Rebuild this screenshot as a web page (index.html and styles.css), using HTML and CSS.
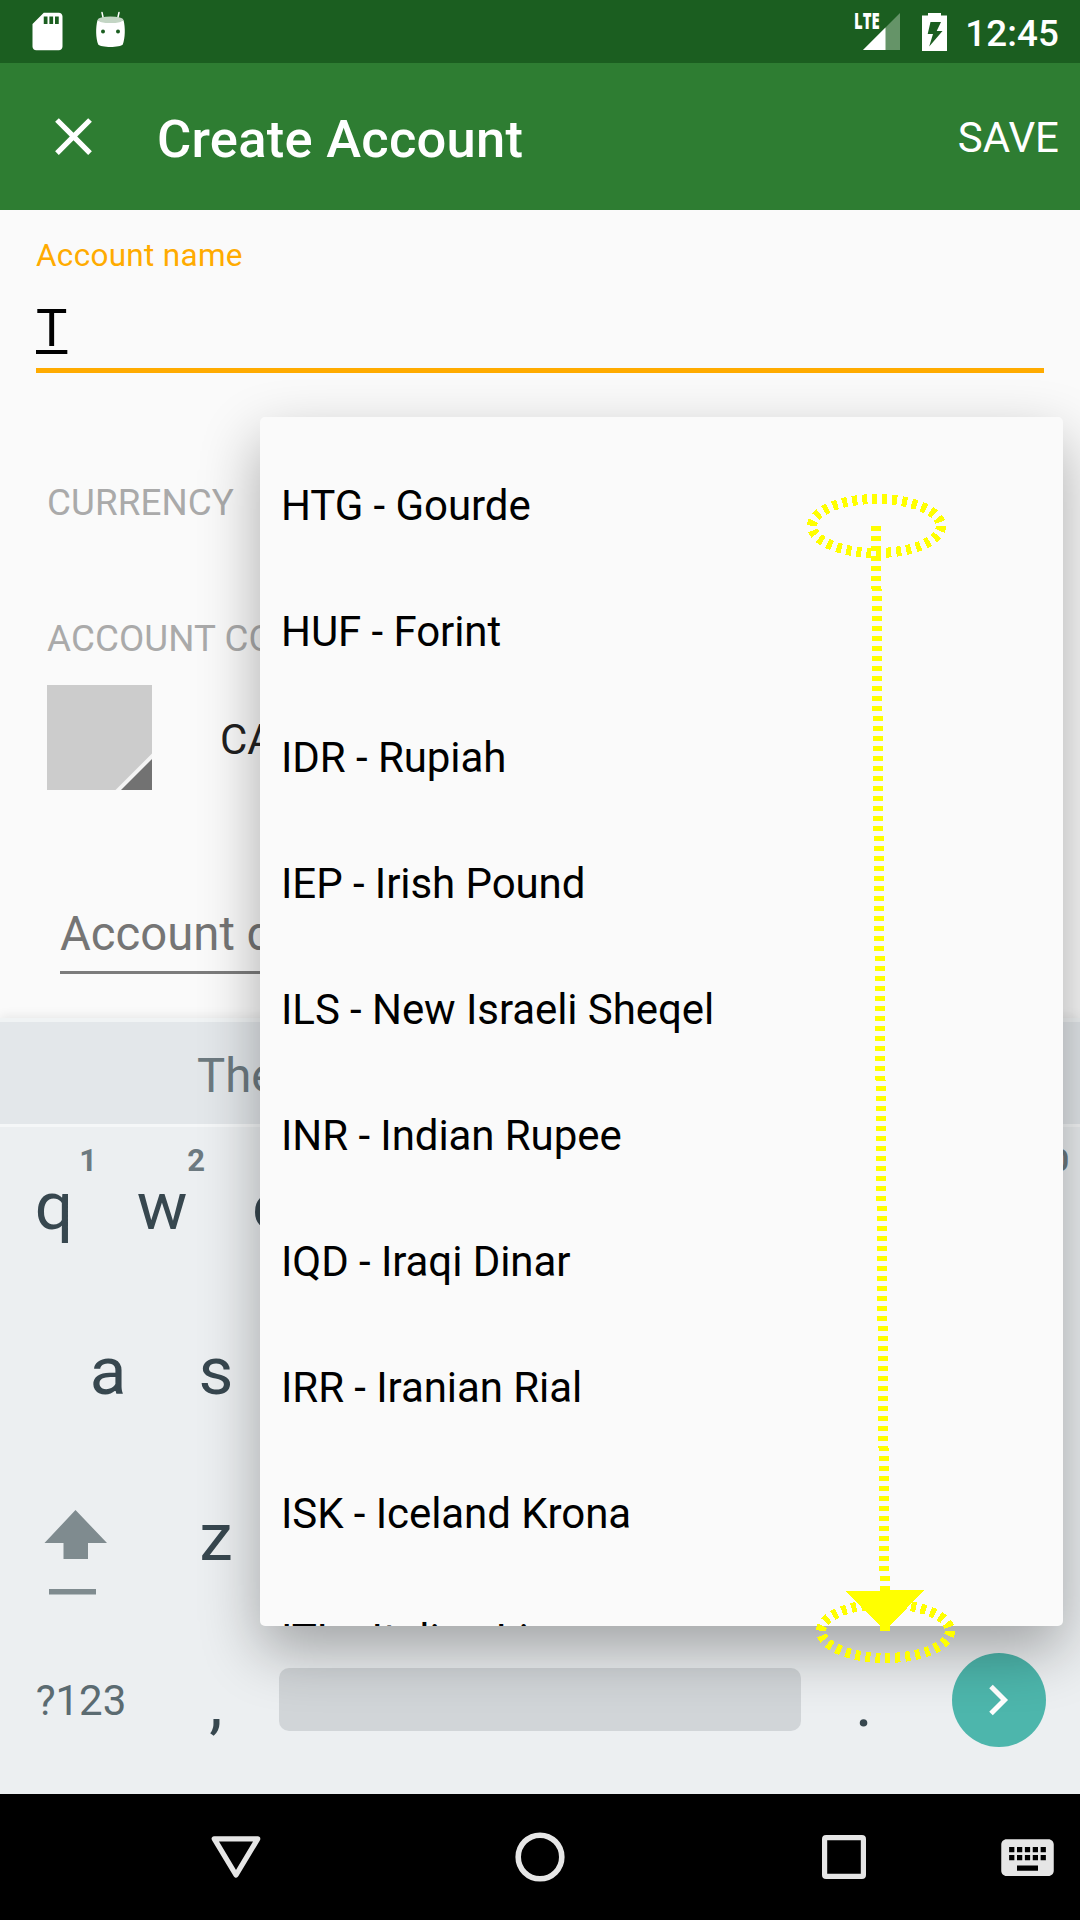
FILE: index.html
```html
<!DOCTYPE html>
<html lang="en">
<head>
<meta charset="utf-8">
<title>Create Account</title>
<link rel="stylesheet" href="styles.css">
</head>
<body>
<div class="screen">
  <div class="status-bar">
    <div class="status-left">
      <svg class="sd-icon" viewBox="0 0 24 24"><path fill="#fff" d="M18 2h-8L4 8v12c0 1.100.9 2 2 2h12c1.100 0 2-.9 2-2V4c0-1.100-.9-2-2-2zm-6 6h-2V4h2v4zm3 0h-2V4h2v4zm3 0h-2V4h2v4z"/></svg>
      <svg class="droid-icon" viewBox="0 0 32 38">
        <path fill="none" stroke="#fff" stroke-width="1.500" stroke-linecap="round" d="M7 1.500l1.300 6M24 1.500l-1.300 6"/>
        <path fill="#fff" d="M2.500 9C6 11.800 25 11.800 28.500 9c2 8 1.700 18-.7 24.500C25.500 36.800 5.500 36.800 3.200 33.500.8 27 .5 17 2.500 9z"/>
        <ellipse cx="15.500" cy="8.800" rx="12.800" ry="3.300" fill="#c3d5c4"/>
        <circle cx="8" cy="20.500" r="2" fill="#1b5e20"/><circle cx="23" cy="20.500" r="2" fill="#1b5e20"/>
      </svg>
    </div>
    <div class="status-right">
      <div class="signal">
        <span class="lte">LTE</span>
        <svg viewBox="0 0 37 37"><path fill="#659468" d="M37 0v37H0z"/><path fill="#fff" d="M22.500 14.500V37H0z"/></svg>
      </div>
      <svg class="battery" viewBox="0 0 25 38"><path fill="#fff" fill-rule="evenodd" d="M6 0h13v2.500h6V38H0V2.500h6zM8.500 9l-2.800 12h5.300L7.200 33.500 20.500 18h-5.800L19 9z"/></svg>
      <span class="clock">12:45</span>
    </div>
  </div>

  <div class="app-bar">
    <svg class="close" viewBox="0 0 24 24"><path fill="#fff" d="M19 6.410L17.590 5 12 10.590 6.410 5 5 6.410 10.590 12 5 17.590 6.410 19 12 13.410 17.590 19 19 17.590 13.410 12z"/></svg>
    <div class="title">Create Account</div>
    <div class="save">SAVE</div>
  </div>

  <div class="form">
    <div class="name-field">
      <div class="name-label">Account name</div>
      <div class="name-input"><span class="composing">T</span></div>
    </div>
    <div class="section currency">CURRENCY</div>
    <div class="section color-type">ACCOUNT CO</div>
    <div class="type-row">
      <svg class="swatch" viewBox="0 0 105 105"><path fill="#ccc" d="M0 0h105v105H0z"/><path fill="#f5f5f5" d="M105 68.500V105H68.500z"/><path fill="#727272" d="M105 74v31H74z"/></svg>
      <div class="type-name">CA</div>
    </div>
    <div class="description">Account d</div>
  </div>

  <div class="keyboard">
    <div class="suggestions"><span class="word">The</span></div>
    <div class="keys first">
      <div class="key">q<span class="hint">1</span></div>
      <div class="key">w<span class="hint">2</span></div>
      <div class="key">e</div>
      <div class="key last"><span class="hint">0</span></div>
    </div>
    <div class="keys second">
      <div class="key">a</div>
      <div class="key">s</div>
    </div>
    <div class="keys third">
      <div class="key wide">
        <svg class="shift" viewBox="0 0 162 165"><path fill="#7f8b8f" d="M75.500 56L107 89H88v16H63.500V89h-19zM49 135h47v5.500H49z"/></svg>
      </div>
      <div class="key">z</div>
    </div>
    <div class="keys fourth">
      <div class="key wide symbols">?123</div>
      <div class="key">,</div>
      <div class="space"></div>
      <div class="key">.</div>
      <div class="key wide"><div class="enter"><svg viewBox="0 0 94 94"><path fill="none" stroke="#fff" stroke-width="5" d="M39 33.500L52.500 47 39 60.500"/></svg></div></div>
    </div>
  </div>

  <div class="nav-bar">
    <svg class="back" viewBox="0 0 50 42"><path fill="none" stroke="#e6e6e6" stroke-width="5.300" stroke-linejoin="round" d="M3.300 2.800h43.400L25 39z"/></svg>
    <svg class="home" viewBox="0 0 50 50"><circle cx="25" cy="25" r="21.800" fill="none" stroke="#e6e6e6" stroke-width="5.600"/></svg>
    <svg class="recents" viewBox="0 0 44 44"><rect x="2.600" y="2.600" width="38.800" height="38.800" rx="1.500" fill="none" stroke="#e6e6e6" stroke-width="5.200"/></svg>
    <svg class="ime" viewBox="0 0 24 24"><path fill="#e6e6e6" d="M20 5H4c-1.100 0-1.990.9-1.990 2L2 17c0 1.100.9 2 2 2h16c1.100 0 2-.9 2-2V7c0-1.100-.9-2-2-2zm-9 3h2v2h-2V8zm0 3h2v2h-2v-2zM8 8h2v2H8V8zm0 3h2v2H8v-2zm-1 2H5v-2h2v2zm0-3H5V8h2v2zm9 7H8v-2h8v2zm0-4h-2v-2h2v2zm0-3h-2V8h2v2zm3 3h-2v-2h2v2zm0-3h-2V8h2v2z"/></svg>
  </div>

  <div class="popup">
    <div class="item">HTG - Gourde</div>
    <div class="item">HUF - Forint</div>
    <div class="item">IDR - Rupiah</div>
    <div class="item">IEP - Irish Pound</div>
    <div class="item">ILS - New Israeli Sheqel</div>
    <div class="item">INR - Indian Rupee</div>
    <div class="item">IQD - Iraqi Dinar</div>
    <div class="item">IRR - Iranian Rial</div>
    <div class="item">ISK - Iceland Krona</div>
    <div class="item">ITL - Italian Lira</div>
  </div>

  <svg class="gesture" viewBox="0 0 1080 1920" shape-rendering="crispEdges">
    <g fill="none" stroke="#ff0" stroke-width="10" stroke-dasharray="5 5">
      <ellipse cx="876.500" cy="526" rx="64.500" ry="27"/>
      <ellipse cx="885.500" cy="1631" rx="64.500" ry="27"/>
      <path d="M876 526L885 1631"/>
    </g>
    <path fill="#ff0" d="M845 1591L924 1590 890 1626V1631H880V1626z"/>
  </svg>
</div>
</body>
</html>
```
FILE: styles.css
```css
* { box-sizing: border-box; }
body {
  margin: 0;
  font-family: Roboto, sans-serif;
  background: #fafafa;
}
svg { display: block; flex: none; }
.screen {
  position: relative;
  width: 1080px;
  height: 1920px;
  overflow: hidden;
  display: flex;
  flex-direction: column;
  white-space: nowrap;
}

.status-bar {
  height: 63px;
  background: #1b5e20;
  color: #fff;
  display: flex;
  justify-content: space-between;
  align-items: center;
  padding: 0 21px 0 25px;
}
.status-left, .status-right { display: flex; align-items: center; }
.status-left { gap: 25px; }
.sd-icon { width: 45px; height: 45px; }
.droid-icon { width: 32px; height: 38px; margin-bottom: 4px; }
.signal { display: flex; align-items: flex-start; }
.signal svg { width: 37px; height: 37px; margin-left: -15px; }
.lte {
  width: 24px;
  font-family: "Open Sans", sans-serif;
  font-size: 22.500px;
  line-height: 16px;
  font-weight: 800;
  transform: scaleX(.66);
  transform-origin: left center;
}
.battery { width: 25px; height: 38px; margin: 0 18px 0 22px; }
.clock { font-size: 36.750px; font-weight: 500; line-height: 44px; padding-top: 4px; letter-spacing: .1px; }

.app-bar {
  height: 147px;
  background: #2e7d32;
  color: #fff;
  display: flex;
  align-items: center;
  padding: 0 21px 0 42px;
}
.close { width: 63px; height: 63px; }
.title {
  flex: 1;
  margin-left: 52px;
  font-size: 52.500px;
  font-weight: 500;
  line-height: 62px;
  padding-top: 4px;
  letter-spacing: .25px;
}
.save { font-size: 42px; line-height: 50px; padding-top: 2px; }

.form { height: 808px; padding-top: 27px; }
.name-field { margin: 0 36px; border-bottom: 5px solid #ffab00; padding-bottom: 9px; }
.name-label { font-size: 31.500px; line-height: 38px; color: #ffab00; letter-spacing: .3px; }
.name-input { margin-top: 22px; font-size: 52.500px; line-height: 62px; color: #000; }
.composing {
  text-decoration: underline;
  text-decoration-thickness: 4px;
  text-underline-offset: 4px;
}
.section { margin-left: 47px; font-size: 36.750px; line-height: 44px; color: #aaa; letter-spacing: .1px; }
.currency { margin-top: 108px; }
.color-type { margin-top: 92px; }
.type-row { display: flex; align-items: center; gap: 68px; margin: 24px 0 0 47px; }
.swatch { width: 105px; height: 105px; }
.type-name { font-size: 42px; line-height: 50px; padding-top: 4px; color: #212121; }
.description {
  margin: 116px 60px 0;
  padding-bottom: 9px;
  font-size: 47.250px;
  line-height: 56px;
  color: #757575;
  border-bottom: 3px solid #7c7c7c;
}

.keyboard {
  height: 776px;
  background: #eceff1;
  color: #37474f;
  font-size: 67.500px;
  border-top: 4px solid #f0f3f4;
  box-shadow: 0 -2px 10px rgba(0, 0, 0, .08);
}
.suggestions {
  height: 105px;
  background: #e3e7ea;
  border-bottom: 3px solid #f5f7f8;
  padding: 6px 85px 0;
  display: grid;
  grid-template-columns: repeat(3, 1fr);
  align-items: center;
  text-align: center;
}
.word { font-size: 47.250px; color: #6d7a80; }
.keys { display: flex; height: 165px; }
.first { height: 161px; padding-bottom: 4px; }
.second { height: 166px; padding: 0 54px 2px; }
.third { padding-bottom: 1px; }
.fourth { height: 166px; align-items: center; }
.key {
  position: relative;
  width: 108px;
  height: 100%;
  display: flex;
  align-items: center;
  justify-content: center;
}
.last { margin-left: auto; }
.wide { width: 162px; }
.hint {
  position: absolute;
  right: 11px;
  top: 15px;
  font-size: 31px;
  line-height: 38px;
  font-weight: 700;
  color: #6d7a80;
}
.shift { width: 162px; height: 165px; }
.symbols { font-size: 42px; color: #5b6b71; padding-bottom: 4px; }
.space { width: 522px; height: 63px; margin: -6px 9px 0; border-radius: 10px; background: #d1d5d8; }
.enter { width: 94px; height: 94px; margin-top: -4px; border-radius: 50%; background: #4db6ac; }

.nav-bar {
  height: 126px;
  background: #000;
  display: flex;
  align-items: center;
  padding: 0 20px 0 211px;
  position: relative;
}
.back { width: 50px; height: 42px; }
.home { width: 50px; height: 50px; margin-left: 254px; }
.recents { width: 44px; height: 44px; margin-left: 257px; }
.ime { width: 63px; height: 63px; margin-left: 130px; }

.popup {
  position: absolute;
  left: 260px;
  top: 417px;
  width: 803px;
  height: 1209px;
  padding: 26px 0 0 21px;
  overflow: hidden;
  border-radius: 5px;
  background: #fafafa;
  box-shadow: 0 24px 60px rgba(0, 0, 0, .32);
}
.item { height: 126px; line-height: 126px; font-size: 42px; color: #000; letter-spacing: -.07px; }

.gesture { position: absolute; left: 0; top: 0; width: 1080px; height: 1920px; }
```
